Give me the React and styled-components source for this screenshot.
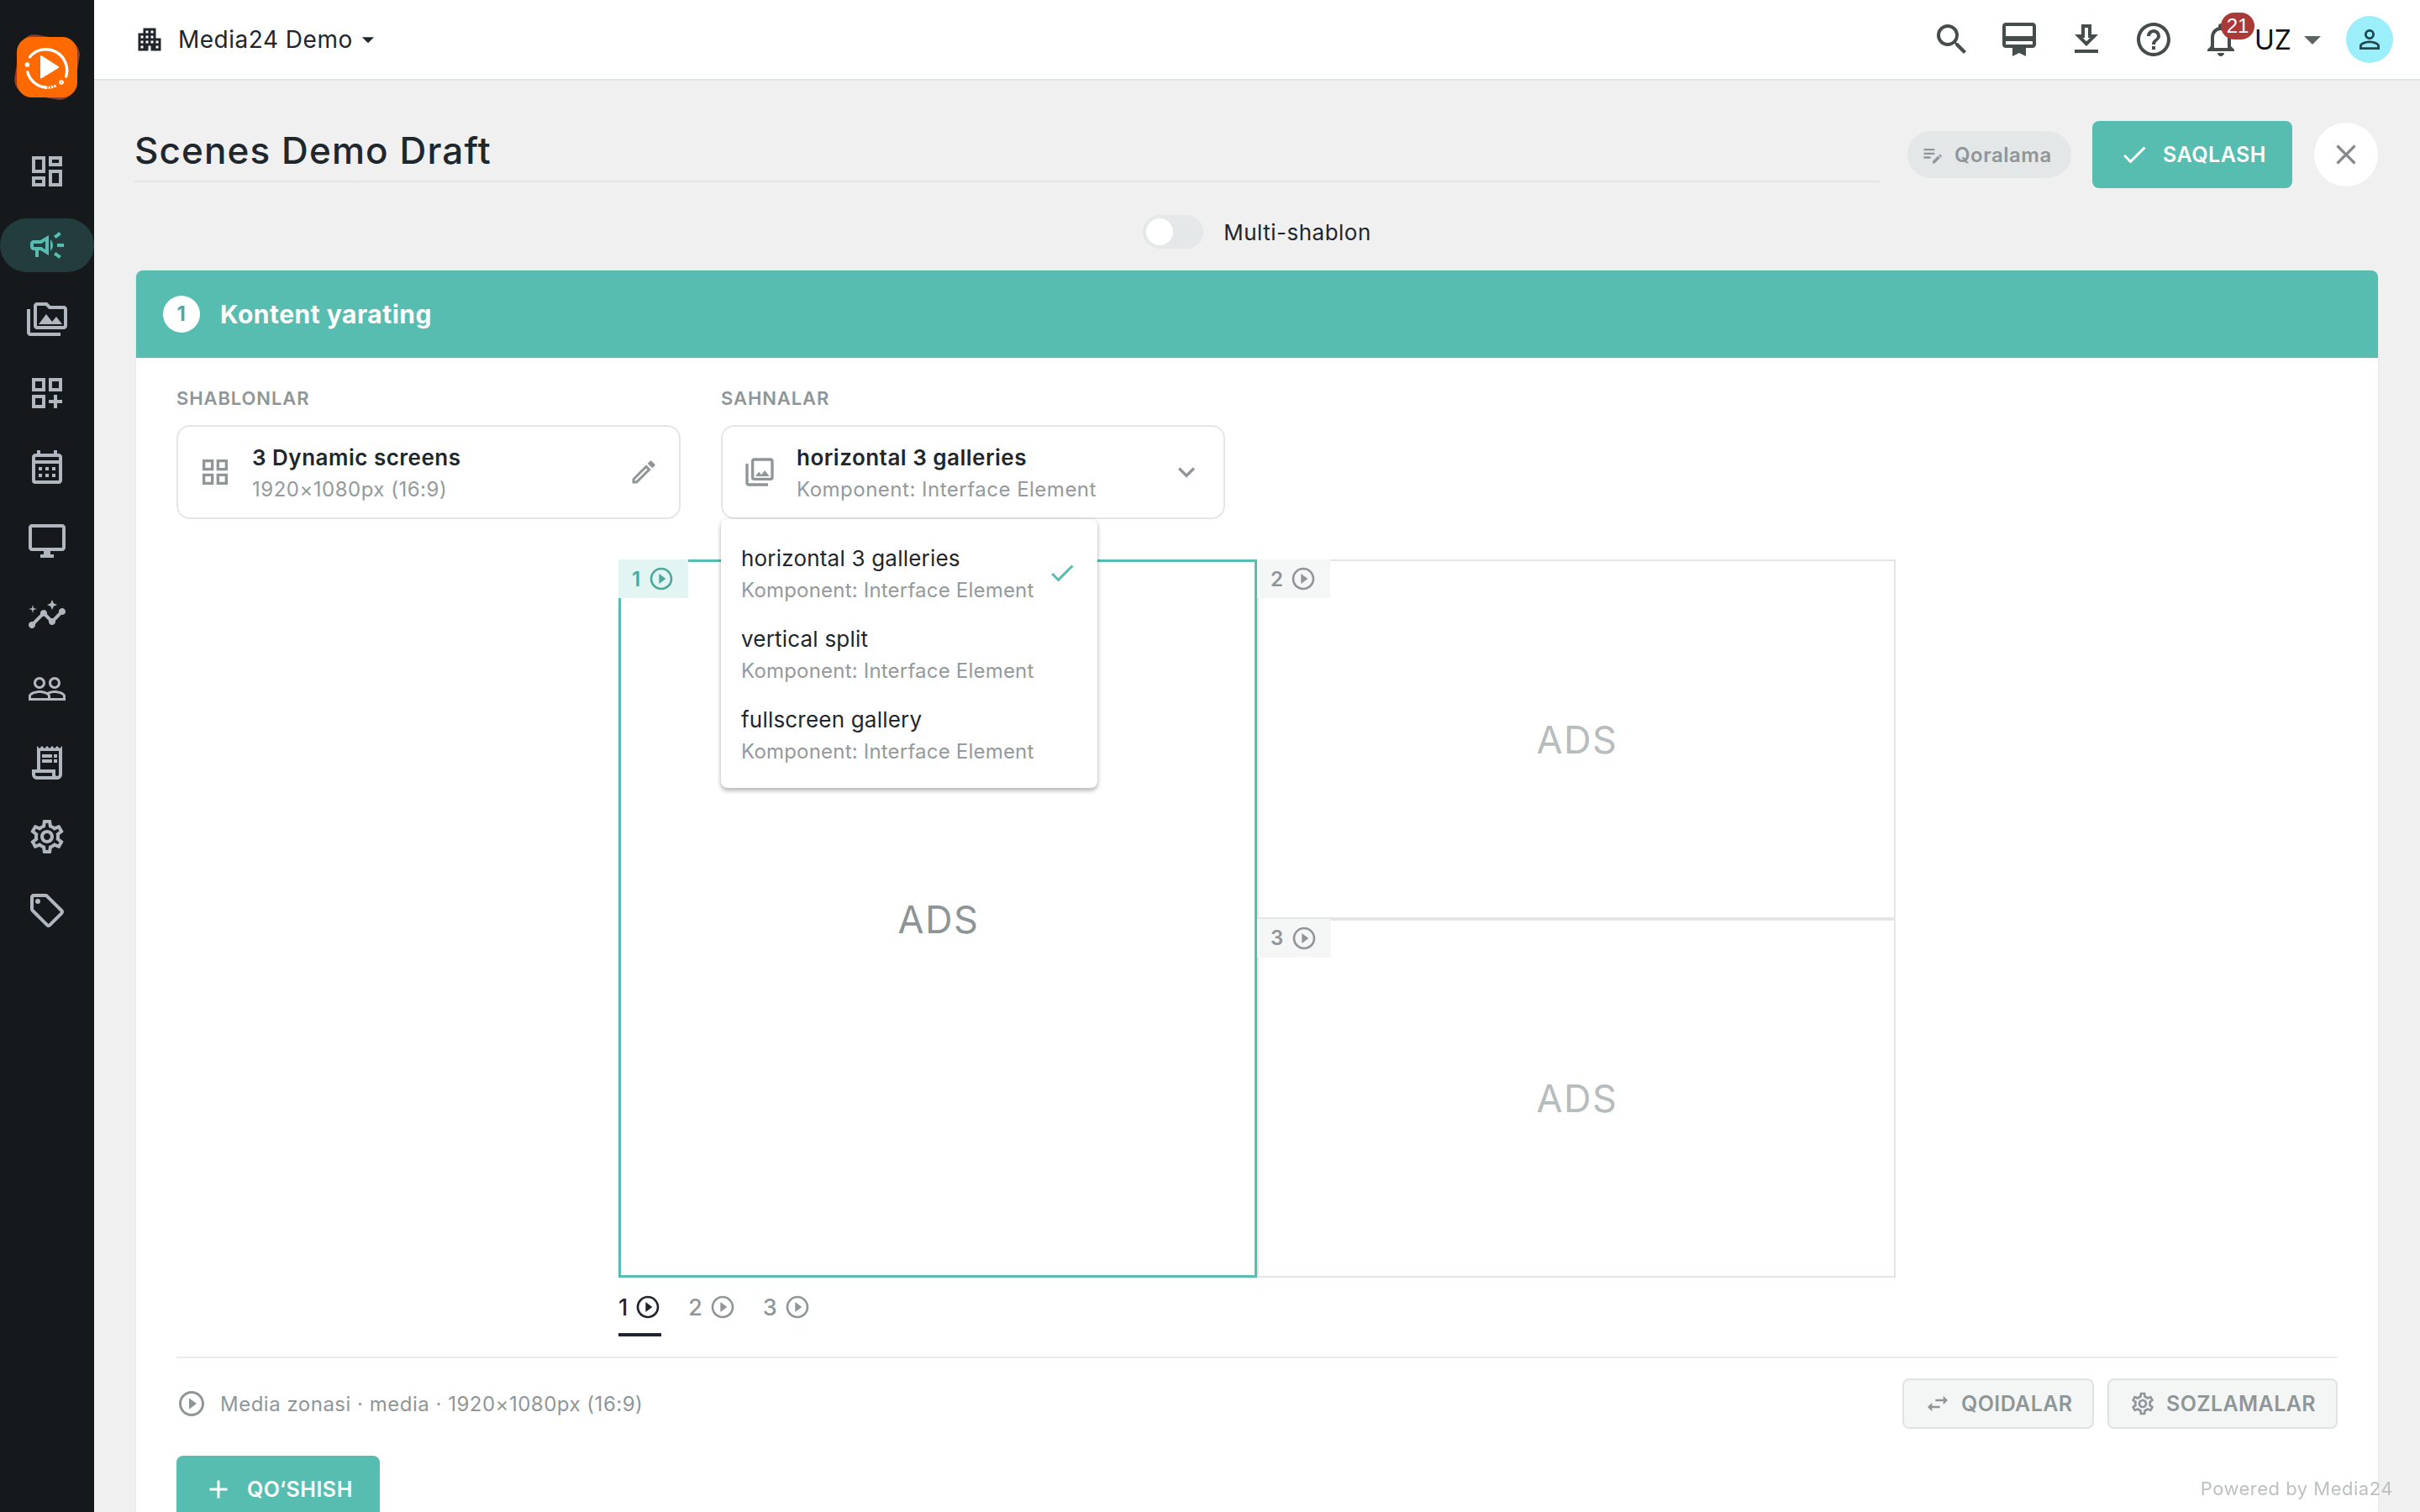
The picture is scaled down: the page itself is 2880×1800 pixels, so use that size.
import styled, { createGlobalStyle } from "styled-components";
import {
  MdAdd,
  MdApartment,
  MdArrowDropDown,
  MdCheck,
  MdClose,
  MdEditNote,
  MdExpandMore,
  MdHelpOutline,
  MdInsights,
  MdOutlineCalendarMonth,
  MdOutlineCampaign,
  MdOutlineCardMembership,
  MdOutlineDashboard,
  MdOutlineDashboardCustomize,
  MdOutlineDesktopWindows,
  MdOutlineDownload,
  MdOutlineEdit,
  MdOutlineGridView,
  MdOutlinePermMedia,
  MdOutlinePhotoLibrary,
  MdOutlineReceiptLong,
  MdOutlineSell,
  MdOutlineSettings,
  MdPeopleOutline,
  MdPersonOutline,
  MdPlayCircleOutline,
  MdNotificationsNone,
  MdSearch,
  MdSwapHoriz,
} from "react-icons/md";

const GlobalStyle = createGlobalStyle`
  :root {
    --primary: #57bdb0;
    --dark: #20272c;
    --muted: #8f9698;
    --line: #e4e5e5;
  }
  * {
    box-sizing: border-box;
  }
  body {
    margin: 0;
    overflow: hidden;
    background: #f0f0f0;
    color: var(--dark);
    font-family: Inter, "Liberation Sans", sans-serif;
  }
  svg {
    display: block;
    flex-shrink: 0;
  }
`;

const SLayout = styled.div`
  display: flex;
  width: 100vw;
  height: 100vh;
  overflow: hidden;
`;

const SSidebar = styled.nav`
  width: 112px;
  flex-shrink: 0;
  display: flex;
  flex-direction: column;
  align-items: center;
  padding-top: 36px;
  background: #15191c;
`;

const SLogo = styled.svg`
  width: 88px;
  height: 88px;
  margin-bottom: 48px;
`;

const SNavItem = styled.a`
  width: 112px;
  height: 64px;
  margin-bottom: 24px;
  display: flex;
  align-items: center;
  justify-content: center;
  border-radius: 32px;
  font-size: 48px;
  color: ${({ $active }) => ($active ? "var(--primary)" : "#b0b7bf")};
  background: ${({ $active }) => ($active ? "#233c3d" : "transparent")};
`;

const SContent = styled.div`
  flex: 1;
  min-width: 0;
  display: flex;
  flex-direction: column;
`;

const SHeader = styled.header`
  height: 96px;
  flex-shrink: 0;
  display: flex;
  align-items: center;
  justify-content: space-between;
  padding: 0 32px 0 48px;
  background: #fff;
  border-bottom: 2px solid #dfe6e5;
`;

const SCompany = styled.div`
  display: flex;
  align-items: center;
  font-size: 28px;
  letter-spacing: 0.5px;

  span {
    margin: 0 1px 0 16px;
  }
`;

const SHeaderActions = styled.div`
  display: flex;
  align-items: center;
  color: #444c4c;
`;

const SIconButton = styled.button`
  position: relative;
  width: 80px;
  height: 80px;
  padding: 0;
  display: flex;
  align-items: center;
  justify-content: center;
  border: none;
  background: transparent;
  color: inherit;
  font-size: 48px;
`;

const SBadge = styled.span`
  position: absolute;
  left: 40px;
  top: 8px;
  width: 40px;
  height: 32px;
  border-radius: 16px;
  background: #a93a37;
  color: #fff;
  font-family: inherit;
  font-size: 24px;
  font-weight: 500;
  line-height: 32px;
  text-align: center;
`;

const SLanguage = styled.div`
  display: flex;
  align-items: center;
  margin-right: 16px;
  font-size: 32px;
  color: #111;

  span {
    width: 45px;
  }
  svg {
    font-size: 48px;
    color: #5c6463;
  }
`;

const SAvatar = styled.div`
  width: 56px;
  height: 56px;
  display: flex;
  align-items: center;
  justify-content: center;
  border-radius: 50%;
  background: #9aeffa;
  color: #1f4a50;
  font-size: 36px;
`;

const SMain = styled.main`
  flex: 1;
  min-height: 0;
  display: flex;
  flex-direction: column;
  padding: 48px 50px 0;
`;

const STitleRow = styled.div`
  height: 80px;
  flex-shrink: 0;
  display: flex;
  align-items: center;
`;

const STitle = styled.h1`
  flex: 1;
  align-self: flex-start;
  height: 73px;
  margin: 0 32px 0 -2px;
  border-bottom: 2px solid #e5e5e5;
  font-size: 44px;
  font-weight: 550;
  line-height: 70px;
  letter-spacing: 1.1px;
`;

const SChip = styled.div`
  height: 56px;
  width: 195px;
  margin-right: 25px;
  display: flex;
  align-items: center;
  gap: 12px;
  padding-left: 16px;
  border-radius: 28px;
  background: #e4e7e8;
  color: var(--muted);
  font-size: 24px;
  font-weight: 600;
  letter-spacing: 0.5px;

  svg {
    font-size: 28px;
  }
`;

const SPrimaryButton = styled.button`
  width: ${({ $width }) => $width}px;
  height: 80px;
  flex-shrink: 0;
  display: flex;
  align-items: center;
  gap: 16px;
  padding: 0 32px;
  border: none;
  border-radius: 8px;
  background: var(--primary);
  color: #fff;
  font-family: inherit;
  font-size: 25px;
  font-weight: 600;
  letter-spacing: 0.5px;
  white-space: nowrap;

  svg {
    font-size: 36px;
  }
`;

const SCloseButton = styled.button`
  width: 76px;
  height: 76px;
  margin-left: 26px;
  padding: 0;
  display: flex;
  align-items: center;
  justify-content: center;
  border: none;
  border-radius: 50%;
  background: #fff;
  color: #858b8c;
  font-size: 40px;
`;

const SToggleRow = styled.div`
  height: 98px;
  flex-shrink: 0;
  display: flex;
  justify-content: center;
  align-items: center;
  gap: 24px;
  padding-top: 6px;
  font-size: 26px;
  letter-spacing: 0.5px;
`;

const SSwitch = styled.span`
  width: 72px;
  height: 40px;
  display: flex;
  align-items: center;
  padding: 4px;
  border-radius: 20px;
  background: #e4e8e8;

  &::before {
    content: "";
    width: 32px;
    height: 32px;
    border-radius: 50%;
    background: #fff;
  }
`;

const SPanel = styled.section`
  flex: 1 0 auto;
  border-radius: 8px 8px 0 0;
  background: #fff;
  box-shadow: 0 0 2px rgba(0, 0, 0, 0.12);
`;

const SPanelHeader = styled.div`
  height: 104px;
  display: flex;
  align-items: center;
  gap: 24px;
  padding-left: 32px;
  border-radius: 8px 8px 0 0;
  background: var(--primary);
  color: #fff;
  font-size: 30px;
  font-weight: 700;
  letter-spacing: 0.5px;
`;

const SStep = styled.span`
  width: 44px;
  height: 44px;
  border-radius: 50%;
  background: #fff;
  color: #4fa99e;
  font-size: 24px;
  line-height: 44px;
  text-align: center;
`;

const SPanelBody = styled.div`
  padding: 32px 48px 0;
`;

const SPickers = styled.div`
  display: flex;
  gap: 48px;
`;

const SPicker = styled.div`
  position: relative;
  width: 600px;
`;

const SLabel = styled.div`
  margin-bottom: 16px;
  color: var(--muted);
  font-size: 22px;
  font-weight: 600;
  line-height: 32px;
  letter-spacing: 0.9px;
`;

const SCard = styled.div`
  height: 112px;
  display: flex;
  align-items: center;
  padding: 0 24px;
  border: 2px solid var(--line);
  border-radius: 16px;
  color: var(--muted);
  font-size: 40px;
`;

const SNames = styled.div`
  flex: 1;
  margin-left: ${({ $indent }) => $indent || 0}px;
  font-size: 24px;
  line-height: 36px;
  letter-spacing: ${({ $bold }) => ($bold ? 0.5 : 0.2)}px;
  color: #949a9b;
  white-space: nowrap;

  strong {
    display: block;
    padding-top: 1px;
    color: var(--dark);
    font-size: 26px;
    font-weight: ${({ $bold }) => ($bold ? 600 : 400)};
    line-height: 40px;
  }
`;

const SMenu = styled.ul`
  position: absolute;
  z-index: 2;
  top: 160px;
  left: 0;
  width: 448px;
  margin: 0;
  padding: 16px 0;
  list-style: none;
  border-radius: 8px;
  background: #fff;
  box-shadow: 0 4px 5px rgba(0, 0, 0, 0.2), 0 1px 6px rgba(0, 0, 0, 0.14);

  li {
    height: 96px;
    display: flex;
    align-items: center;
    padding: 0 24px;
    font-size: 36px;
    color: var(--primary);
  }
`;

const SStage = styled.div`
  width: 1520px;
  height: 855px;
  margin: 48px auto 0;
  display: grid;
  grid-template-columns: 1fr 1fr;
  grid-template-rows: 1fr 1fr;
`;

const SZone = styled.div`
  position: relative;
  display: flex;
  align-items: center;
  justify-content: center;
  padding: 1px 0 0 2px;
  grid-row: ${({ $active }) => ($active ? "span 2" : "auto")};
  border: ${({ $active }) => ($active ? "3px solid var(--primary)" : "2px solid var(--line)")};
  color: ${({ $active }) => ($active ? "#8d9495" : "#b7bcbd")};
  font-size: 45px;
  letter-spacing: 1.5px;
`;

const SZoneTag = styled.span`
  position: absolute;
  top: ${({ $active }) => ($active ? -3 : -2)}px;
  left: ${({ $active }) => ($active ? -3 : -2)}px;
  height: 46px;
  display: flex;
  align-items: center;
  gap: 8px;
  padding: 0 16px;
  background: ${({ $active }) => ($active ? "#e2f5f2" : "#f5f6f6")};
  color: ${({ $active }) => ($active ? "#49a99b" : "var(--muted)")};
  font-size: 24px;
  font-weight: 600;
  letter-spacing: 0.5px;

  svg {
    font-size: 32px;
  }
`;

const STabs = styled.div`
  width: 1520px;
  height: 70px;
  margin: 0 auto 24px;
  display: flex;
  gap: 32px;
`;

const STab = styled.div`
  display: flex;
  align-items: center;
  gap: 8px;
  border-top: 4px solid transparent;
  border-bottom: 4px solid ${({ $active }) => ($active ? "#20242c" : "transparent")};
  color: ${({ $active }) => ($active ? "#20242c" : "var(--muted)")};
  font-size: 27px;
  font-weight: 500;

  svg {
    font-size: 32px;
  }
`;

const SZoneBar = styled.div`
  display: flex;
  align-items: center;
  gap: 16px;
  padding-top: 24px;
  margin-bottom: 32px;
  border-top: 2px solid #ebebeb;
  color: #8f9698;
`;

const SZoneInfo = styled.div`
  flex: 1;
  display: flex;
  align-items: center;
  gap: 16px;
  font-size: 24px;
  letter-spacing: 0.5px;

  svg {
    font-size: 36px;
  }
`;

const SOutlineButton = styled.button`
  width: ${({ $width }) => $width}px;
  height: 60px;
  display: flex;
  align-items: center;
  gap: 12px;
  padding: 0 24px;
  border: 2px solid #e0e3e3;
  border-radius: 8px;
  background: #f4f6f6;
  color: var(--muted);
  font-family: inherit;
  font-size: 25px;
  font-weight: 600;
  letter-spacing: 0.4px;

  svg {
    font-size: 32px;
  }
`;

const SPowered = styled.div`
  position: fixed;
  right: 32px;
  bottom: 12px;
  color: #bcc0c1;
  font-size: 22px;
  line-height: 32px;
  letter-spacing: 0.5px;
`;

const navIcons = [
  MdOutlineDashboard,
  MdOutlineCampaign,
  MdOutlinePermMedia,
  MdOutlineDashboardCustomize,
  MdOutlineCalendarMonth,
  MdOutlineDesktopWindows,
  MdInsights,
  MdPeopleOutline,
  MdOutlineReceiptLong,
  MdOutlineSettings,
  MdOutlineSell,
];

const headerIcons = [MdSearch, MdOutlineCardMembership, MdOutlineDownload, MdHelpOutline];

const scenes = ["horizontal 3 galleries", "vertical split", "fullscreen gallery"];

const zones = [1, 2, 3];

const Logo = () => (
  <SLogo viewBox="0 0 88 88">
    <rect x="8" y="8" width="72" height="72" rx="18" fill="#8a3f35" transform="rotate(10 44 44)" />
    <rect x="8" y="8" width="72" height="72" rx="18" fill="#ff6a00" />
    <g fill="none" stroke="#fff" strokeWidth="3.4" strokeLinecap="round">
      <path d="M23.6 31.6A25 25 0 0 1 66.6 55" />
      <path d="M20.8 50A25 25 0 0 0 42 68" />
      <path d="M42 68.2q8 .6 13-2.6" strokeWidth="3.2" strokeDasharray="2.2 1.3" strokeLinecap="butt" />
      <circle cx="61" cy="62" r="1.8" strokeWidth="2" />
    </g>
    <circle cx="20.4" cy="41" r="2.8" fill="#fff" />
    <path d="M36 31.5v24.5q0 2 1.8.9L57.5 45q1.5-1 0-2L37.8 30.6q-1.8-1.1-1.8.9z" fill="#fff" />
  </SLogo>
);

const App = () => {
  return (
    <SLayout>
      <GlobalStyle />
      <SSidebar>
        <Logo />
        {navIcons.map((Icon, i) => (
          <SNavItem key={i} $active={i === 1}>
            <Icon />
          </SNavItem>
        ))}
      </SSidebar>
      <SContent>
        <SHeader>
          <SCompany>
            <MdApartment size={36} />
            <span>Media24 Demo</span>
            <MdArrowDropDown size={34} />
          </SCompany>
          <SHeaderActions>
            {headerIcons.map((Icon, i) => (
              <SIconButton key={i}>
                <Icon />
              </SIconButton>
            ))}
            <SIconButton>
              <MdNotificationsNone />
              <SBadge>21</SBadge>
            </SIconButton>
            <SLanguage>
              <span>UZ</span>
              <MdArrowDropDown />
            </SLanguage>
            <SAvatar>
              <MdPersonOutline />
            </SAvatar>
          </SHeaderActions>
        </SHeader>
        <SMain>
          <STitleRow>
            <STitle>Scenes Demo Draft</STitle>
            <SChip>
              <MdEditNote />
              Qoralama
            </SChip>
            <SPrimaryButton $width={238}>
              <MdCheck />
              SAQLASH
            </SPrimaryButton>
            <SCloseButton>
              <MdClose />
            </SCloseButton>
          </STitleRow>
          <SToggleRow>
            <SSwitch />
            <span>Multi-shablon</span>
          </SToggleRow>
          <SPanel>
            <SPanelHeader>
              <SStep>1</SStep>
              <span>Kontent yarating</span>
            </SPanelHeader>
            <SPanelBody>
              <SPickers>
                <SPicker>
                  <SLabel>SHABLONLAR</SLabel>
                  <SCard>
                    <MdOutlineGridView />
                    <SNames $bold $indent={24}>
                      <strong>3 Dynamic screens</strong>
                      1920×1080px (16:9)
                    </SNames>
                    <MdOutlineEdit size={36} />
                  </SCard>
                </SPicker>
                <SPicker>
                  <SLabel>SAHNALAR</SLabel>
                  <SCard>
                    <MdOutlinePhotoLibrary />
                    <SNames $bold $indent={24}>
                      <strong>horizontal 3 galleries</strong>
                      Komponent: Interface Element
                    </SNames>
                    <MdExpandMore />
                  </SCard>
                  <SMenu>
                    {scenes.map((name, i) => (
                      <li key={name}>
                        <SNames>
                          <strong>{name}</strong>
                          Komponent: Interface Element
                        </SNames>
                        {i === 0 && <MdCheck />}
                      </li>
                    ))}
                  </SMenu>
                </SPicker>
              </SPickers>
              <SStage>
                {zones.map((n) => (
                  <SZone key={n} $active={n === 1}>
                    <SZoneTag $active={n === 1}>
                      {n}
                      <MdPlayCircleOutline />
                    </SZoneTag>
                    ADS
                  </SZone>
                ))}
              </SStage>
              <STabs>
                {zones.map((n) => (
                  <STab key={n} $active={n === 1}>
                    {n}
                    <MdPlayCircleOutline />
                  </STab>
                ))}
              </STabs>
              <SZoneBar>
                <SZoneInfo>
                  <MdPlayCircleOutline />
                  Media zonasi · media · 1920×1080px (16:9)
                </SZoneInfo>
                <SOutlineButton $width={228}>
                  <MdSwapHoriz />
                  QOIDALAR
                </SOutlineButton>
                <SOutlineButton $width={274}>
                  <MdOutlineSettings />
                  SOZLAMALAR
                </SOutlineButton>
              </SZoneBar>
              <SPrimaryButton $width={242}>
                <MdAdd />
                QO‘SHISH
              </SPrimaryButton>
            </SPanelBody>
          </SPanel>
        </SMain>
      </SContent>
      <SPowered>Powered by Media24</SPowered>
    </SLayout>
  );
};

export default App;
